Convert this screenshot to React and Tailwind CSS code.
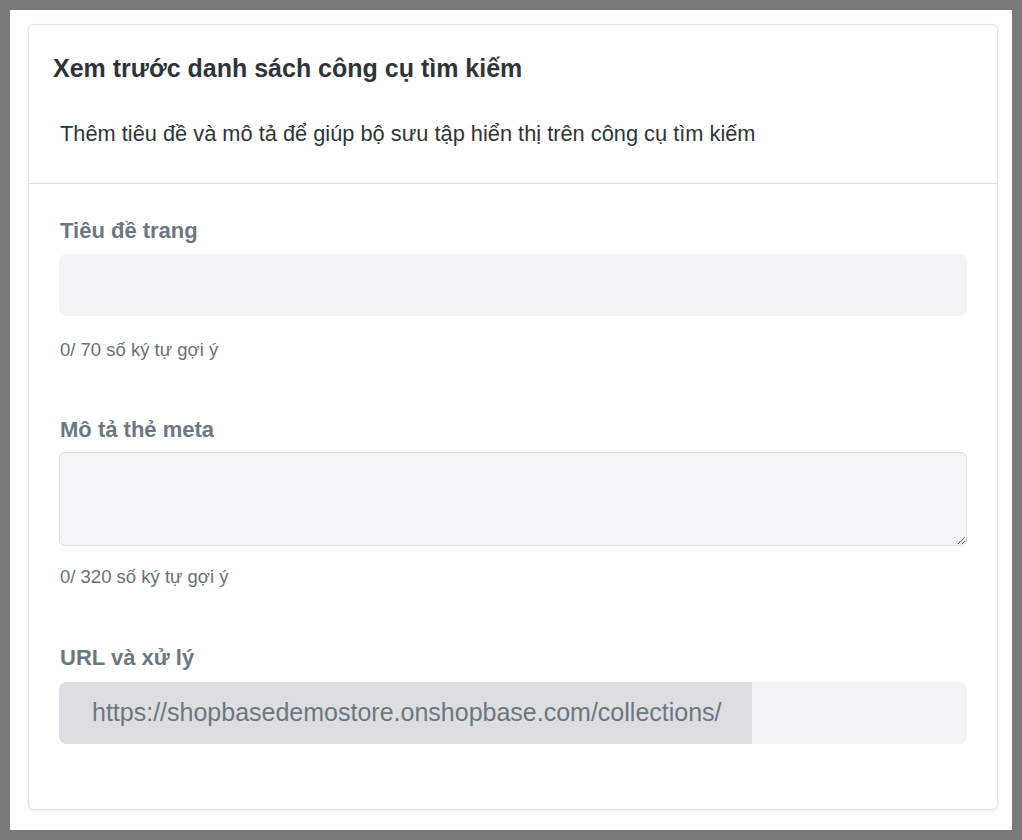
export default function App() {
  return (
    <div className="min-h-screen bg-[#7a7a7a] p-[10px]" style={{ fontFamily: '"Liberation Sans", Arial, sans-serif' }}>
      <div className="bg-white h-[820px] pl-[18px] pr-[14px] pt-[14px]">
        <div className="bg-white border border-[#e3e5e8] rounded-[6px] shadow-[0_1px_3px_rgba(0,0,0,0.08)] h-[786px]">
          {/* Header */}
          <div className="px-[24px] pt-[28px] pb-[36px] border-b border-[#dfe1e4]">
            <h2 className="text-[25px] font-bold text-[#2f3438] leading-[30px]">Xem trước danh sách công cụ tìm kiếm</h2>
            <p className="mt-[38px] pl-[7px] text-[21.8px] text-[#2f3438] leading-[26px]">
              Thêm tiêu đề và mô tả để giúp bộ sưu tập hiển thị trên công cụ tìm kiếm
            </p>
          </div>

          <div className="px-[30px] pt-[34px]">
            {/* Page title */}
            <label className="block pl-px text-[22px] font-bold text-[#6c7781] leading-[26px]">Tiêu đề trang</label>
            <input className="mt-[10px] block w-full h-[62px] bg-[#f3f4f6] rounded-[8px] outline-none px-4" />
            <p className="mt-[23px] pl-px text-[18.5px] text-[#6b6f73] leading-[22px]">0/ 70 số ký tự gợi ý</p>

            {/* Meta description */}
            <label className="block pl-px mt-[56px] text-[22px] font-bold text-[#6c7781] leading-[26px]">Mô tả thẻ meta</label>
            <textarea className="mt-[9px] block w-full h-[94px] bg-[#f4f5f7] border border-[#dcdee1] rounded-[6px] outline-none px-4 py-2" />
            <p className="mt-[20px] pl-px text-[18.5px] text-[#6b6f73] leading-[22px]">0/ 320 số ký tự gợi ý</p>

            {/* URL */}
            <label className="block pl-px mt-[57px] text-[22px] font-bold text-[#6c7781] leading-[26px]">URL và xử lý</label>
            <div className="mt-[11px] flex h-[62px] rounded-[8px] overflow-hidden bg-[#f3f4f6]">
              <span className="flex items-center bg-[#dcdfe2] pl-[33px] pr-[30px] text-[25px] text-[#6c7781] whitespace-nowrap">
                https://shopbasedemostore.onshopbase.com/collections/
              </span>
              <input className="flex-1 min-w-0 bg-transparent outline-none px-3" />
            </div>
          </div>
        </div>
      </div>
    </div>
  )
}
